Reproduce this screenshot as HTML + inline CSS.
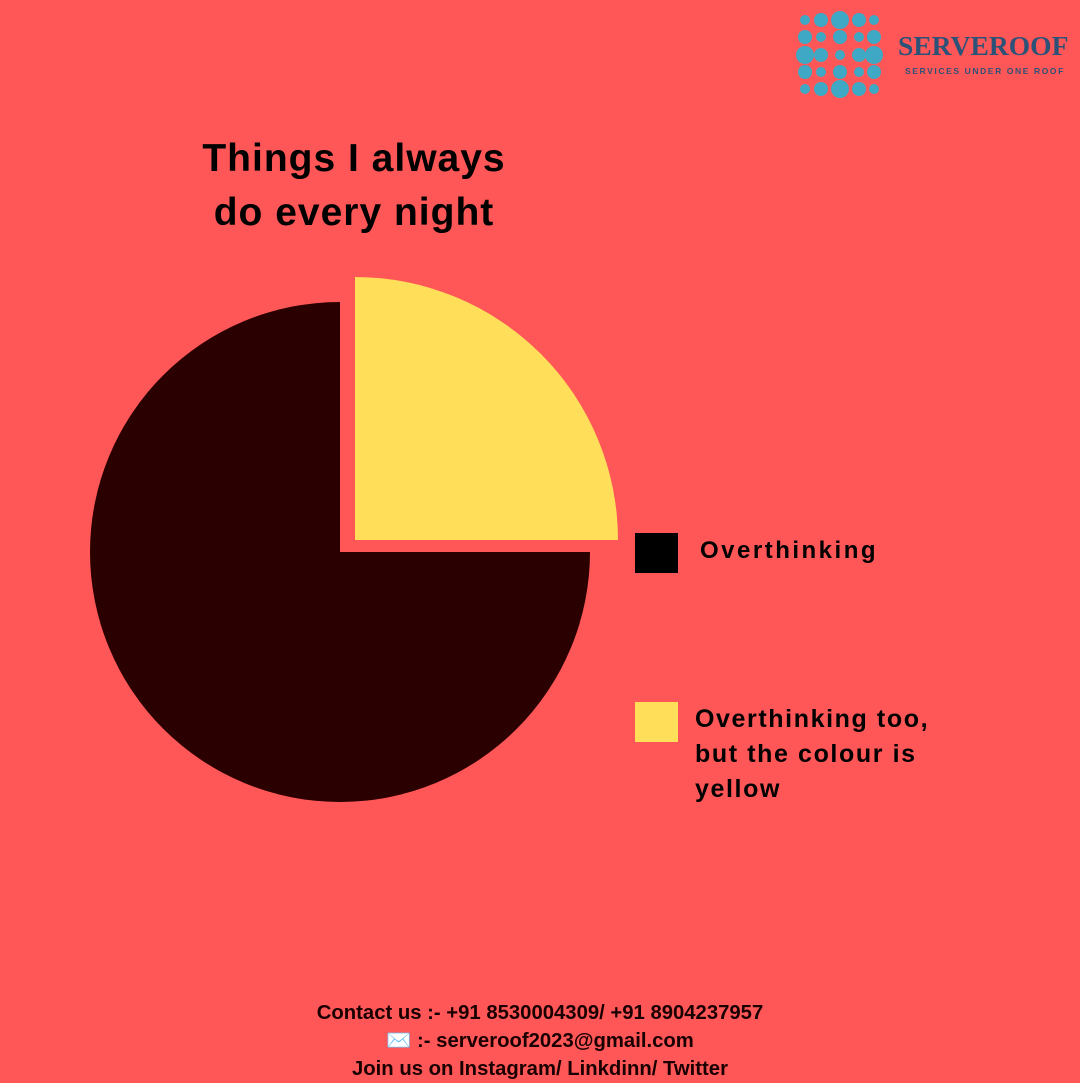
<!DOCTYPE html>
<html><head><meta charset="utf-8"><style>
body{margin:0;width:1080px;height:1080px;background:#FF5757;position:relative;overflow:hidden;font-family:"Liberation Sans",sans-serif;font-weight:bold;color:#000}
.t{position:absolute;white-space:nowrap}
</style></head><body>
<svg class="t" style="left:0;top:0" width="1080" height="1080">
<g fill="#3FA9C5">
<circle cx="805" cy="20" r="5"/><circle cx="821" cy="20" r="7"/><circle cx="840" cy="20" r="9"/><circle cx="859" cy="20" r="7"/><circle cx="874" cy="20" r="5"/>
<circle cx="805" cy="37" r="7"/><circle cx="821" cy="37" r="5"/><circle cx="840" cy="37" r="7"/><circle cx="859" cy="37" r="5"/><circle cx="874" cy="37" r="7"/>
<circle cx="805" cy="55" r="9"/><circle cx="821" cy="55" r="7"/><circle cx="840" cy="55" r="5"/><circle cx="859" cy="55" r="7"/><circle cx="874" cy="55" r="9"/>
<circle cx="805" cy="72" r="7"/><circle cx="821" cy="72" r="5"/><circle cx="840" cy="72" r="7"/><circle cx="859" cy="72" r="5"/><circle cx="874" cy="72" r="7"/>
<circle cx="805" cy="89" r="5"/><circle cx="821" cy="89" r="7"/><circle cx="840" cy="89" r="9"/><circle cx="859" cy="89" r="7"/><circle cx="874" cy="89" r="5"/>
</g>
<path d="M340 552 L340 302 A250 250 0 1 0 590 552 Z" fill="#2A0000"/>
<path d="M355 540 L355 277 A263 263 0 0 1 618 540 Z" fill="#FFDE59"/>
<rect x="635" y="533" width="43" height="40" fill="#000"/>
<rect x="635" y="702" width="43" height="40" fill="#FFDE59"/>
</svg>
<div class="t" style="left:898px;top:31px;font-size:27px;color:#2D5277;font-family:'Liberation Serif',serif;font-weight:900;transform:scaleX(1.02);transform-origin:left">SERVEROOF</div>
<div class="t" style="left:905px;top:66px;font-size:8.5px;color:#2D5277;letter-spacing:1.6px">SERVICES UNDER ONE ROOF</div>
<div class="t" style="left:150px;top:132px;width:408px;text-align:center;font-size:39px;line-height:54px;letter-spacing:1px">Things I always<br>do every night</div>
<div class="t" style="left:700px;top:537px;font-size:24px;letter-spacing:2.5px">Overthinking</div>
<div class="t" style="left:695px;top:702px;font-size:25px;line-height:35px;letter-spacing:1.6px">Overthinking too,<br>but the colour is<br>yellow</div>
<div class="t" style="left:0;top:999px;width:1080px;text-align:center;font-size:20.3px;line-height:28px;color:#1a0000">Contact us :- +91 8530004309/ +91 8904237957<br>✉️ :- serveroof2023@gmail.com<br>Join us on Instagram/ Linkdinn/ Twitter</div>
</body></html>
